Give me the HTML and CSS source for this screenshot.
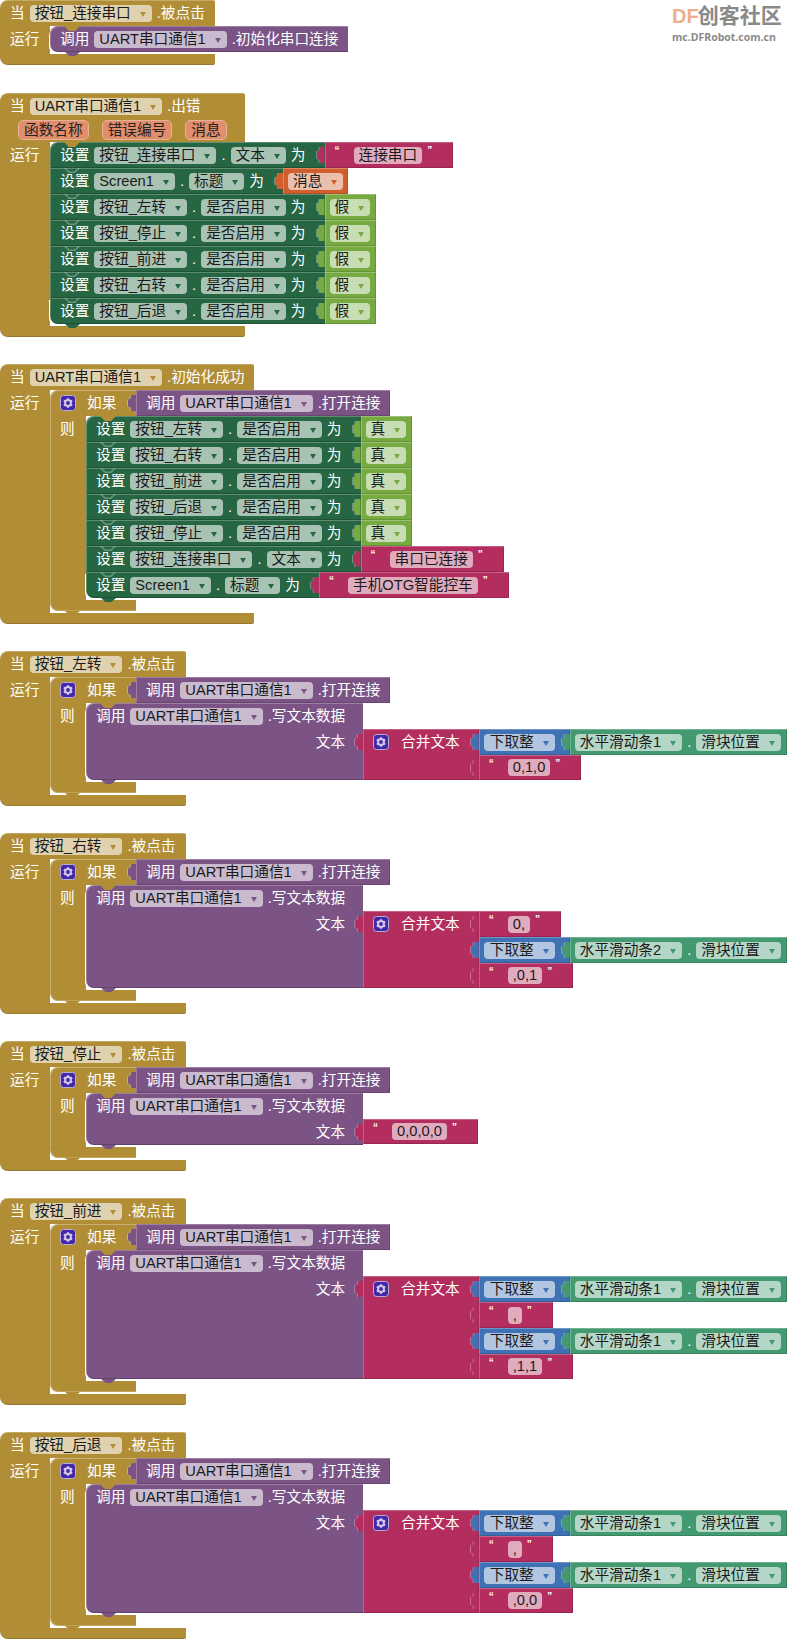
FILE: index.html
```html
<!DOCTYPE html>
<html lang="en">
<head>
    <meta charset="UTF-8">
    <title>Blocks</title>
    <link rel="stylesheet" href="styles.css">
</head>
<body>
    <svg class="defs" width="0" height="0">
        <symbol id="gear" viewBox="0 0 16 16">
            <rect x="0.5" y="0.5" width="15" height="15" rx="3" fill="#4528a8" stroke="#b7aedb"/>
            <circle cx="8" cy="8" r="2.9" fill="none" stroke="#cfc8ea" stroke-width="2"/>
            <path d="M8 3.2v2M8 10.8v2M3.8 5.6l1.8 1M10.4 9.4l1.8 1M3.8 10.4l1.8-1M10.4 6.6l1.8-1" stroke="#cfc8ea" stroke-width="2"/>
        </symbol>
    </svg>

    <div class="logo">
        <div class="logo-top"><span class="logo-df">DF</span>创客社区</div>
        <div class="logo-url">mc.DFRobot.com.cn</div>
    </div>

    <div class="canvas">

        <!-- connect button -->
        <div class="event first">
            <div class="hat">当<span class="fld">按钮_连接串口<i></i></span>.被点击</div>
            <div class="run">
                <div class="side">运行</div>
                <div class="stack">
                    <div class="line">
                        <div class="stmt call purple">调用<span class="fld">UART串口通信1<i></i></span>.初始化串口连接</div>
                    </div>
                </div>
            </div>
            <div class="foot"></div>
        </div>

        <!-- error -->
        <div class="event">
            <div class="hat">当<span class="fld">UART串口通信1<i></i></span>.出错</div>
            <div class="params"><span class="chip">函数名称</span><span class="chip">错误编号</span><span class="chip">消息</span></div>
            <div class="run">
                <div class="side">运行</div>
                <div class="stack">
                    <div class="line">
                        <div class="stmt green">设置<span class="fld">按钮_连接串口<i></i></span>.<span class="fld">文本<i></i></span>为</div>
                        <div class="val str pink"><span class="q">“</span><span class="fld">连接串口</span><span class="q">”</span></div>
                    </div>
                    <div class="line">
                        <div class="stmt green">设置<span class="fld">Screen1<i></i></span>.<span class="fld">标题<i></i></span>为</div>
                        <div class="val orange"><span class="fld">消息<i></i></span></div>
                    </div>
                    <div class="line">
                        <div class="stmt green">设置<span class="fld">按钮_左转<i></i></span>.<span class="fld">是否启用<i></i></span>为</div>
                        <div class="val lime"><span class="fld">假<i></i></span></div>
                    </div>
                    <div class="line">
                        <div class="stmt green">设置<span class="fld">按钮_停止<i></i></span>.<span class="fld">是否启用<i></i></span>为</div>
                        <div class="val lime"><span class="fld">假<i></i></span></div>
                    </div>
                    <div class="line">
                        <div class="stmt green">设置<span class="fld">按钮_前进<i></i></span>.<span class="fld">是否启用<i></i></span>为</div>
                        <div class="val lime"><span class="fld">假<i></i></span></div>
                    </div>
                    <div class="line">
                        <div class="stmt green">设置<span class="fld">按钮_右转<i></i></span>.<span class="fld">是否启用<i></i></span>为</div>
                        <div class="val lime"><span class="fld">假<i></i></span></div>
                    </div>
                    <div class="line">
                        <div class="stmt green">设置<span class="fld">按钮_后退<i></i></span>.<span class="fld">是否启用<i></i></span>为</div>
                        <div class="val lime"><span class="fld">假<i></i></span></div>
                    </div>
                </div>
            </div>
            <div class="foot"></div>
        </div>

        <!-- init ok -->
        <div class="event">
            <div class="hat">当<span class="fld">UART串口通信1<i></i></span>.初始化成功</div>
            <div class="run">
                <div class="side">运行</div>
                <div class="stack">
                    <div class="if">
                        <div class="if-top">
                            <div class="if-head"><svg class="gear"><use href="#gear"/></svg>如果</div>
                            <div class="val call purple">调用<span class="fld">UART串口通信1<i></i></span>.打开连接</div>
                        </div>
                        <div class="if-mid">
                            <div class="if-side">则</div>
                            <div class="stack">
                                <div class="line">
                                    <div class="stmt green">设置<span class="fld">按钮_左转<i></i></span>.<span class="fld">是否启用<i></i></span>为</div>
                                    <div class="val lime"><span class="fld">真<i></i></span></div>
                                </div>
                                <div class="line">
                                    <div class="stmt green">设置<span class="fld">按钮_右转<i></i></span>.<span class="fld">是否启用<i></i></span>为</div>
                                    <div class="val lime"><span class="fld">真<i></i></span></div>
                                </div>
                                <div class="line">
                                    <div class="stmt green">设置<span class="fld">按钮_前进<i></i></span>.<span class="fld">是否启用<i></i></span>为</div>
                                    <div class="val lime"><span class="fld">真<i></i></span></div>
                                </div>
                                <div class="line">
                                    <div class="stmt green">设置<span class="fld">按钮_后退<i></i></span>.<span class="fld">是否启用<i></i></span>为</div>
                                    <div class="val lime"><span class="fld">真<i></i></span></div>
                                </div>
                                <div class="line">
                                    <div class="stmt green">设置<span class="fld">按钮_停止<i></i></span>.<span class="fld">是否启用<i></i></span>为</div>
                                    <div class="val lime"><span class="fld">真<i></i></span></div>
                                </div>
                                <div class="line">
                                    <div class="stmt green">设置<span class="fld">按钮_连接串口<i></i></span>.<span class="fld">文本<i></i></span>为</div>
                                    <div class="val str pink"><span class="q">“</span><span class="fld">串口已连接</span><span class="q">”</span></div>
                                </div>
                                <div class="line">
                                    <div class="stmt green">设置<span class="fld">Screen1<i></i></span>.<span class="fld">标题<i></i></span>为</div>
                                    <div class="val str pink"><span class="q">“</span><span class="fld">手机OTG智能控车</span><span class="q">”</span></div>
                                </div>
                            </div>
                        </div>
                        <div class="if-foot"></div>
                    </div>
                </div>
            </div>
            <div class="foot"></div>
        </div>

        <!-- left -->
        <div class="event">
            <div class="hat">当<span class="fld">按钮_左转<i></i></span>.被点击</div>
            <div class="run">
                <div class="side">运行</div>
                <div class="stack">
                    <div class="if">
                        <div class="if-top">
                            <div class="if-head"><svg class="gear"><use href="#gear"/></svg>如果</div>
                            <div class="val call purple">调用<span class="fld">UART串口通信1<i></i></span>.打开连接</div>
                        </div>
                        <div class="if-mid">
                            <div class="if-side">则</div>
                            <div class="stack">
                                <div class="line">
                                    <div class="stmt tall purple">
                                        <div class="tall-row">调用<span class="fld">UART串口通信1<i></i></span>.写文本数据</div>
                                        <div class="tall-row right">文本</div>
                                    </div>
                                    <div class="join pink">
                                        <div class="join-head val pink"><svg class="gear"><use href="#gear"/></svg>合并文本</div>
                                        <div class="inputs">
                                            <div class="line">
                                                <div class="val blue"><span class="fld">下取整<i></i></span></div>
                                                <div class="val teal"><span class="fld">水平滑动条1<i></i></span>.<span class="fld">滑块位置<i></i></span></div>
                                            </div>
                                            <div class="line">
                                                <div class="val str pink"><span class="q">“</span><span class="fld">0,1,0</span><span class="q">”</span></div>
                                            </div>
                                        </div>
                                    </div>
                                </div>
                            </div>
                        </div>
                        <div class="if-foot"></div>
                    </div>
                </div>
            </div>
            <div class="foot"></div>
        </div>

        <!-- right -->
        <div class="event">
            <div class="hat">当<span class="fld">按钮_右转<i></i></span>.被点击</div>
            <div class="run">
                <div class="side">运行</div>
                <div class="stack">
                    <div class="if">
                        <div class="if-top">
                            <div class="if-head"><svg class="gear"><use href="#gear"/></svg>如果</div>
                            <div class="val call purple">调用<span class="fld">UART串口通信1<i></i></span>.打开连接</div>
                        </div>
                        <div class="if-mid">
                            <div class="if-side">则</div>
                            <div class="stack">
                                <div class="line">
                                    <div class="stmt tall purple">
                                        <div class="tall-row">调用<span class="fld">UART串口通信1<i></i></span>.写文本数据</div>
                                        <div class="tall-row right">文本</div>
                                    </div>
                                    <div class="join pink">
                                        <div class="join-head val pink"><svg class="gear"><use href="#gear"/></svg>合并文本</div>
                                        <div class="inputs">
                                            <div class="line">
                                                <div class="val str pink"><span class="q">“</span><span class="fld">0,</span><span class="q">”</span></div>
                                            </div>
                                            <div class="line">
                                                <div class="val blue"><span class="fld">下取整<i></i></span></div>
                                                <div class="val teal"><span class="fld">水平滑动条2<i></i></span>.<span class="fld">滑块位置<i></i></span></div>
                                            </div>
                                            <div class="line">
                                                <div class="val str pink"><span class="q">“</span><span class="fld">,0,1</span><span class="q">”</span></div>
                                            </div>
                                        </div>
                                    </div>
                                </div>
                            </div>
                        </div>
                        <div class="if-foot"></div>
                    </div>
                </div>
            </div>
            <div class="foot"></div>
        </div>

        <!-- stop -->
        <div class="event">
            <div class="hat">当<span class="fld">按钮_停止<i></i></span>.被点击</div>
            <div class="run">
                <div class="side">运行</div>
                <div class="stack">
                    <div class="if">
                        <div class="if-top">
                            <div class="if-head"><svg class="gear"><use href="#gear"/></svg>如果</div>
                            <div class="val call purple">调用<span class="fld">UART串口通信1<i></i></span>.打开连接</div>
                        </div>
                        <div class="if-mid">
                            <div class="if-side">则</div>
                            <div class="stack">
                                <div class="line">
                                    <div class="stmt tall purple">
                                        <div class="tall-row">调用<span class="fld">UART串口通信1<i></i></span>.写文本数据</div>
                                        <div class="tall-row right">文本</div>
                                    </div>
                                    <div class="inputs">
                                        <div class="line">
                                            <div class="val str pink"><span class="q">“</span><span class="fld">0,0,0,0</span><span class="q">”</span></div>
                                        </div>
                                    </div>
                                </div>
                            </div>
                        </div>
                        <div class="if-foot"></div>
                    </div>
                </div>
            </div>
            <div class="foot"></div>
        </div>

        <!-- forward -->
        <div class="event">
            <div class="hat">当<span class="fld">按钮_前进<i></i></span>.被点击</div>
            <div class="run">
                <div class="side">运行</div>
                <div class="stack">
                    <div class="if">
                        <div class="if-top">
                            <div class="if-head"><svg class="gear"><use href="#gear"/></svg>如果</div>
                            <div class="val call purple">调用<span class="fld">UART串口通信1<i></i></span>.打开连接</div>
                        </div>
                        <div class="if-mid">
                            <div class="if-side">则</div>
                            <div class="stack">
                                <div class="line">
                                    <div class="stmt tall purple">
                                        <div class="tall-row">调用<span class="fld">UART串口通信1<i></i></span>.写文本数据</div>
                                        <div class="tall-row right">文本</div>
                                    </div>
                                    <div class="join pink">
                                        <div class="join-head val pink"><svg class="gear"><use href="#gear"/></svg>合并文本</div>
                                        <div class="inputs">
                                            <div class="line">
                                                <div class="val blue"><span class="fld">下取整<i></i></span></div>
                                                <div class="val teal"><span class="fld">水平滑动条1<i></i></span>.<span class="fld">滑块位置<i></i></span></div>
                                            </div>
                                            <div class="line">
                                                <div class="val str pink"><span class="q">“</span><span class="fld">,</span><span class="q">”</span></div>
                                            </div>
                                            <div class="line">
                                                <div class="val blue"><span class="fld">下取整<i></i></span></div>
                                                <div class="val teal"><span class="fld">水平滑动条1<i></i></span>.<span class="fld">滑块位置<i></i></span></div>
                                            </div>
                                            <div class="line">
                                                <div class="val str pink"><span class="q">“</span><span class="fld">,1,1</span><span class="q">”</span></div>
                                            </div>
                                        </div>
                                    </div>
                                </div>
                            </div>
                        </div>
                        <div class="if-foot"></div>
                    </div>
                </div>
            </div>
            <div class="foot"></div>
        </div>

        <!-- back -->
        <div class="event">
            <div class="hat">当<span class="fld">按钮_后退<i></i></span>.被点击</div>
            <div class="run">
                <div class="side">运行</div>
                <div class="stack">
                    <div class="if">
                        <div class="if-top">
                            <div class="if-head"><svg class="gear"><use href="#gear"/></svg>如果</div>
                            <div class="val call purple">调用<span class="fld">UART串口通信1<i></i></span>.打开连接</div>
                        </div>
                        <div class="if-mid">
                            <div class="if-side">则</div>
                            <div class="stack">
                                <div class="line">
                                    <div class="stmt tall purple">
                                        <div class="tall-row">调用<span class="fld">UART串口通信1<i></i></span>.写文本数据</div>
                                        <div class="tall-row right">文本</div>
                                    </div>
                                    <div class="join pink">
                                        <div class="join-head val pink"><svg class="gear"><use href="#gear"/></svg>合并文本</div>
                                        <div class="inputs">
                                            <div class="line">
                                                <div class="val blue"><span class="fld">下取整<i></i></span></div>
                                                <div class="val teal"><span class="fld">水平滑动条1<i></i></span>.<span class="fld">滑块位置<i></i></span></div>
                                            </div>
                                            <div class="line">
                                                <div class="val str pink"><span class="q">“</span><span class="fld">,</span><span class="q">”</span></div>
                                            </div>
                                            <div class="line">
                                                <div class="val blue"><span class="fld">下取整<i></i></span></div>
                                                <div class="val teal"><span class="fld">水平滑动条1<i></i></span>.<span class="fld">滑块位置<i></i></span></div>
                                            </div>
                                            <div class="line">
                                                <div class="val str pink"><span class="q">“</span><span class="fld">,0,0</span><span class="q">”</span></div>
                                            </div>
                                        </div>
                                    </div>
                                </div>
                            </div>
                        </div>
                        <div class="if-foot"></div>
                    </div>
                </div>
            </div>
            <div class="foot"></div>
        </div>

    </div>
</body>
</html>
```
FILE: styles.css
```css
html, body {
    margin: 0;
    background-color: #fff;
}
body {
    position: relative;
    overflow-x: hidden;
    font-family: "Liberation Sans", "Noto Sans CJK SC", sans-serif;
    font-size: 14.67px;
    line-height: 26px;
    color: #fff;
    white-space: nowrap;
}
.defs {
    position: absolute;
}

/* colours */
.green { --c: #266643; }
.purple { --c: #7c5385; }
.pink { --c: #b32d5e; }
.orange { --c: #d05f2d; }
.lime { --c: #77ab41; }
.blue { --c: #3f71b5; }
.teal { --c: #439970; }

/* watermark */
.logo {
    position: absolute;
    top: 4px;
    left: 672px;
    width: 112px;
    font-weight: bold;
    color: #8a8a8a;
}
.logo-top {
    font-size: 21px;
    line-height: 24px;
}
.logo-df {
    color: #f0ae8b;
    font-size: 20px;
    margin-right: -1px;
}
.logo-url {
    font-size: 10.5px;
    line-height: 14px;
    margin-top: 2px;
    font-family: "Open Sans", sans-serif;
}

.canvas {
    display: flex;
    flex-direction: column;
    gap: 27px;
}
.first {
    margin-bottom: 1px;
}

/* event block */
.event {
    --c: #b18e35;
    width: fit-content;
}
.hat {
    display: flex;
    align-items: center;
    gap: 5px;
    height: 26px;
    padding: 0 10px;
    background-color: #b18e35;
    border-radius: 8px 2px 0 0;
    box-shadow: inset 0 1px 0 rgba(255, 255, 255, 0.25);
}
.params {
    display: flex;
    align-items: flex-start;
    gap: 13px;
    height: 23px;
    padding: 1px 18px 0;
    box-sizing: border-box;
    background-color: #b18e35;
}
.chip {
    height: 18px;
    line-height: 18px;
    padding: 0 5px;
    color: #222;
    background-color: #e08e6c;
    border: 1px solid #e8b297;
    border-radius: 5px;
}
.run {
    display: flex;
    width: 0;
    min-width: 100%;
}
.side {
    flex: none;
    width: 40px;
    padding-left: 10px;
    background-color: #b18e35;
}
.run > .stack {
    margin-bottom: 2px;
}
.foot {
    height: 11px;
    background-color: #b18e35;
    border-radius: 0 0 2px 8px;
    box-shadow: inset 0 -1px 0 rgba(0, 0, 0, 0.15);
}

.stack {
    flex: none;
    width: fit-content;
}
.line {
    display: flex;
    align-items: flex-start;
}

/* statement blocks */
.stmt {
    position: relative;
    display: flex;
    align-items: center;
    gap: 5px;
    flex: none;
    height: 26px;
    padding: 0 19px 0 10px;
    background-color: var(--c);
    box-shadow: inset 1px 1px 0 rgba(255, 255, 255, 0.25), inset 0 -1px 0 rgba(0, 0, 0, 0.2);
}
.stmt.call {
    padding-right: 10px;
}
.stmt::before {
    content: "";
    position: absolute;
    top: 0;
    left: 14px;
    width: 16px;
    height: 5px;
    background-color: rgba(255, 255, 255, 0.3);
    clip-path: polygon(0 0, 30% 100%, 70% 100%, 100% 0, 88% 0, 65% 70%, 35% 70%, 12% 0);
}
.line:first-child > .stmt::before {
    background-color: #b18e35;
    clip-path: polygon(0 0, 30% 100%, 70% 100%, 100% 0);
}
.stack > .line:first-child > .stmt {
    border-top-left-radius: 8px;
}
.stack > .line:last-child > .stmt {
    border-bottom-left-radius: 8px;
    box-shadow: inset 1px 1px 0 rgba(255, 255, 255, 0.25), inset 0 -1px 0 rgba(0, 0, 0, 0.2), -1px 2px 0 #fff;
}
.stack > .line:last-child > .stmt::after,
.if::after {
    content: "";
    position: absolute;
    z-index: 1;
    left: 15px;
    bottom: -4px;
    width: 15px;
    height: 4px;
    background-color: var(--c);
    clip-path: polygon(0 0, 100% 0, 70% 100%, 30% 100%);
}

/* call with an input */
.stmt.tall {
    display: block;
    align-self: stretch;
    height: auto;
    padding-right: 18px;
}
.tall-row {
    display: flex;
    align-items: center;
    gap: 5px;
    height: 26px;
}
.tall-row.right {
    justify-content: flex-end;
}
.join,
.inputs {
    margin-top: 26px;
}
.join {
    display: flex;
}
.join .inputs {
    margin-top: 0;
}
.join-head.val {
    height: auto;
    align-items: flex-start;
    gap: 0;
    padding: 0 19px 0 10px;
}
.join-head .gear {
    margin: 5px 12px 0 0;
}
.inputs .line:last-child .val {
    height: 25px;
}

/* value blocks */
.val {
    position: relative;
    display: flex;
    align-items: center;
    gap: 5px;
    flex: none;
    height: 26px;
    padding: 0 5px;
    background-color: var(--c);
    box-shadow: inset 1px 1px 0 rgba(255, 255, 255, 0.25), inset -1px -1px 0 rgba(0, 0, 0, 0.15);
}
.val::before,
.val::after {
    content: "";
    position: absolute;
    top: 5px;
    left: -8px;
    width: 8px;
    height: 16px;
    clip-path: path("M8 0 L4 0 Q2 0 3 2 Q3 4 1 4 Q0 4 0 6 L0 10 Q0 12 1 12 Q3 12 3 14 Q2 16 4 16 L8 16 Z");
}
.val::before {
    left: -9px;
    background-color: rgba(255, 255, 255, 0.3);
}
.val::after {
    background-color: var(--c);
}
.val.call {
    padding: 0 10px;
}
.val.str {
    gap: 0;
    padding: 0 21px 0 10px;
}
.val.lime,
.val.teal {
    padding-right: 6px;
}
.val.blue {
    padding-right: 15px;
}
.val.blue .fld {
    padding-left: 6px;
}
.q {
    flex: none;
    width: 5px;
    align-self: flex-start;
    margin-top: 3px;
    font-size: 10px;
    font-weight: bold;
    line-height: 12px;
}
.q:first-child {
    margin-right: 14px;
}
.fld + .q {
    margin-left: 5px;
}

/* dropdown / text field */
.fld {
    display: flex;
    align-items: center;
    gap: 8px;
    flex: none;
    height: 17px;
    line-height: 17px;
    padding: 0 5px;
    color: #1a1a1a;
    background-color: rgba(255, 255, 255, 0.6);
    border-radius: 4px;
}
.fld i {
    flex: none;
    width: 0;
    height: 0;
    margin: 2px 1px 0;
    border-left: 3.5px solid transparent;
    border-right: 3.5px solid transparent;
    border-top: 5px solid var(--c);
}

/* if block */
.if {
    position: relative;
    width: 86px;
}
.if-top {
    display: flex;
    align-items: flex-start;
}
.if-head {
    position: relative;
    display: flex;
    align-items: center;
    flex: none;
    width: 86px;
    height: 26px;
    padding-left: 10px;
    box-sizing: border-box;
    background-color: #b18e35;
    border-radius: 8px 0 0 0;
    box-shadow: inset 1px 1px 0 rgba(255, 255, 255, 0.3);
}
.gear {
    flex: none;
    width: 16px;
    height: 16px;
    margin-right: 11px;
}
.if-mid {
    display: flex;
}
.if-mid > .stack {
    margin-bottom: 2px;
}
.if-side {
    flex: none;
    width: 26px;
    padding-left: 10px;
    background-color: #b18e35;
    box-shadow: inset 1px 0 0 rgba(255, 255, 255, 0.3);
}
.if-foot {
    height: 11px;
    background-color: #b18e35;
    border-radius: 0 0 0 8px;
    box-shadow: inset 1px -1px 0 rgba(255, 255, 255, 0.2);
}
```
